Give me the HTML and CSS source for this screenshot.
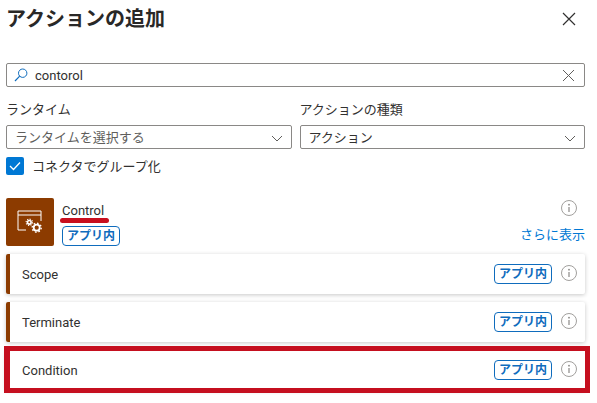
FILE: index.html
```html
<!DOCTYPE html>
<html lang="ja">

<head>
  <meta charset="UTF-8">
  <title>アクションの追加</title>
  <link rel="stylesheet" href="styles.css">
</head>

<body>
  <div class="panel">
    <div class="header">
      <h1>アクションの追加</h1>
      <svg class="close" width="14" height="14" viewBox="0 0 14 14"><path d="M1 1L13 13M13 1L1 13" stroke="#323130" stroke-width="1.2" fill="none"/></svg>
    </div>

    <div class="search">
      <svg class="search-icon" width="14" height="14" viewBox="0 0 14 14"><circle cx="8.7" cy="5.2" r="4.2" stroke="#0f6cbd" fill="none"/><path d="M5.7 8.2L1 13" stroke="#0f6cbd" stroke-width="1.2" fill="none"/></svg>
      <span class="search-text">contorol</span>
      <svg class="search-clear" width="13" height="13" viewBox="0 0 13 13"><path d="M1 1L12 12M12 1L1 12" stroke="#605e5c" fill="none"/></svg>
    </div>

    <div class="filters">
      <div class="filter">
        <div class="filter-label">ランタイム</div>
        <div class="select">
          <span class="placeholder">ランタイムを選択する</span>
          <svg class="chevron" width="12" height="7" viewBox="0 0 12 7"><path d="M1 1L6 6L11 1" stroke="#605e5c" fill="none"/></svg>
        </div>
      </div>
      <div class="filter">
        <div class="filter-label">アクションの種類</div>
        <div class="select">
          <span>アクション</span>
          <svg class="chevron" width="12" height="7" viewBox="0 0 12 7"><path d="M1 1L6 6L11 1" stroke="#605e5c" fill="none"/></svg>
        </div>
      </div>
    </div>

    <div class="group-check">
      <span class="checkbox">
        <svg width="12" height="10" viewBox="0 0 12 10"><path d="M1 5L4.5 8.5L11 1.5" stroke="#fff" stroke-width="1.3" fill="none"/></svg>
      </span>
      <span class="group-label">コネクタでグループ化</span>
    </div>

    <div class="connector">
      <div class="connector-icon">
        <svg width="26" height="24" viewBox="0 0 26 24">
          <path d="M9 20H1V1H24V11M1 5H24" stroke="#fff" stroke-width="1" fill="none"/>
          <circle cx="12.3" cy="12.3" r="1.8" stroke="#fff" stroke-width="1.6" fill="none"/>
          <circle cx="12.3" cy="12.3" r="3.2" stroke="#fff" stroke-width="1.1" stroke-dasharray="1.2 1.3" fill="none"/>
          <circle cx="19.7" cy="17.7" r="3" stroke="#fff" stroke-width="1.8" fill="none"/>
          <circle cx="19.7" cy="17.7" r="4.5" stroke="#fff" stroke-width="1.4" stroke-dasharray="1.6 1.9" fill="none"/>
        </svg>
      </div>
      <div class="connector-info">
        <div class="connector-name">Control</div>
        <span class="badge">アプリ内</span>
      </div>
      <div class="connector-side">
        <svg class="info" width="18" height="18" viewBox="0 0 18 18"><circle cx="9" cy="9" r="7.5" stroke="#a19f9d" fill="none"/><path d="M9 8V13" stroke="#8a8886" stroke-width="1.2"/><circle cx="9" cy="5.7" r=".9" fill="#8a8886"/></svg>
        <span class="more">さらに表示</span>
      </div>
    </div>

    <div class="action-list">
      <div class="action">
        <span class="action-name">Scope</span>
        <span class="badge">アプリ内</span>
        <svg class="info" width="18" height="18" viewBox="0 0 18 18"><circle cx="9" cy="9" r="7.5" stroke="#a19f9d" fill="none"/><path d="M9 8V13" stroke="#8a8886" stroke-width="1.2"/><circle cx="9" cy="5.7" r=".9" fill="#8a8886"/></svg>
      </div>
      <div class="action">
        <span class="action-name">Terminate</span>
        <span class="badge">アプリ内</span>
        <svg class="info" width="18" height="18" viewBox="0 0 18 18"><circle cx="9" cy="9" r="7.5" stroke="#a19f9d" fill="none"/><path d="M9 8V13" stroke="#8a8886" stroke-width="1.2"/><circle cx="9" cy="5.7" r=".9" fill="#8a8886"/></svg>
      </div>
      <div class="action">
        <span class="action-name">Condition</span>
        <span class="badge">アプリ内</span>
        <svg class="info" width="18" height="18" viewBox="0 0 18 18"><circle cx="9" cy="9" r="7.5" stroke="#a19f9d" fill="none"/><path d="M9 8V13" stroke="#8a8886" stroke-width="1.2"/><circle cx="9" cy="5.7" r=".9" fill="#8a8886"/></svg>
      </div>
    </div>

    <div class="mark-underline"></div>
    <div class="mark-box"></div>
  </div>
</body>

</html>
```

FILE: styles.css
```css
html,
body {
    margin: 0;
    padding: 0;
    height: 100%;
    background-color: #fff;
    overflow: hidden;
}

body {
    font-family: Roboto, "Noto Sans CJK JP", sans-serif;
    font-size: 13px;
    color: #323130;
}

.panel {
    position: relative;
    box-sizing: border-box;
    width: 597px;
    height: 403px;
    padding: 0 12px 0 6px;
}

.header {
    display: flex;
    justify-content: space-between;
    align-items: center;
    height: 38px;
    padding-right: 9px;
    margin-bottom: 25px;
}

h1 {
    margin: 0;
    font-size: 20px;
    font-weight: 700;
    line-height: 38px;
    color: #292827;
}

.search {
    display: flex;
    align-items: center;
    box-sizing: border-box;
    height: 24px;
    padding: 0 9px 0 7px;
    border: 1px solid #8a8886;
    border-radius: 2px;
}

.search-icon {
    margin-right: 7px;
}

.search-text {
    flex: 1;
}

.filters {
    display: flex;
    gap: 8px;
    margin-top: 12px;
}

.filter {
    flex: 1;
}

.filter-label {
    height: 26px;
    line-height: 22px;
}

.select {
    display: flex;
    justify-content: space-between;
    align-items: center;
    box-sizing: border-box;
    height: 24px;
    padding: 0 8px 2px 8px;
    border: 1px solid #8a8886;
    border-radius: 2px;
}

.chevron {
    margin-top: 4px;
}

.placeholder {
    color: #605e5c;
}

.group-check {
    display: flex;
    align-items: center;
    gap: 8px;
    height: 18px;
    margin-top: 8px;
}

.group-label {
    margin-bottom: 2px;
}

.checkbox {
    display: flex;
    justify-content: center;
    align-items: center;
    width: 18px;
    height: 18px;
    background-color: #0078d4;
    border-radius: 2px;
}

.connector {
    display: flex;
    margin-top: 23px;
    height: 48px;
}

.connector-icon {
    display: flex;
    justify-content: center;
    align-items: center;
    flex: none;
    width: 48px;
    height: 48px;
    background-color: #8c3b00;
    border-radius: 2px;
}

.connector-info {
    flex: 1;
    padding-left: 8px;
}

.connector-name {
    height: 28px;
    line-height: 26px;
}

.connector-side {
    display: flex;
    flex-direction: column;
    align-items: flex-end;
    justify-content: space-between;
}

.connector-side .info {
    margin-right: 7px;
    margin-top: 1px;
}

.more {
    color: #0078d4;
    line-height: 20px;
    margin-bottom: 1px;
}

.badge {
    display: inline-block;
    box-sizing: border-box;
    height: 20px;
    padding: 0 4px;
    border: 1px solid #0f6cbd;
    border-radius: 4px;
    color: #0f6cbd;
    font-size: 12px;
    font-weight: 700;
    line-height: 18px;
}

.action-list {
    display: flex;
    flex-direction: column;
    gap: 8px;
    margin-top: 8px;
}

.action {
    display: flex;
    align-items: center;
    box-sizing: border-box;
    height: 40px;
    padding: 0 7px 0 12px;
    background-color: #fff;
    border-left: 4px solid #8c3b00;
    border-radius: 2px;
    box-shadow: 0 1px 4px rgba(0, 0, 0, 0.22);
}

.action-name {
    flex: 1;
}

.action .badge {
    margin-right: 8px;
}

.action .info {
    margin-bottom: 2px;
}

.mark-underline {
    position: absolute;
    left: 60px;
    top: 218px;
    width: 49px;
    height: 5px;
    background-color: #c80f1e;
    border-radius: 3px;
}

.mark-box {
    position: absolute;
    left: 4px;
    top: 346px;
    box-sizing: border-box;
    width: 586px;
    height: 47px;
    border: 5px solid #c50f1f;
    border-left-width: 6px;
}
```
